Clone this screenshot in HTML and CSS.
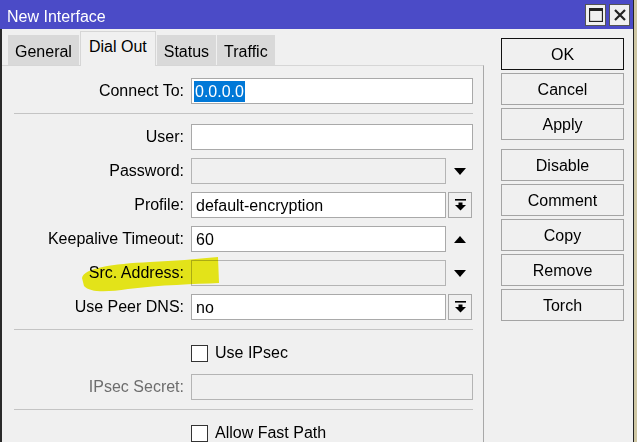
FILE: index.html
```html
<html>
<head>
    <link rel="stylesheet" href="styles.css">
    <title>New Interface</title>
</head>
<body>
    <div class="window">
        <div class="titlebar">
            <span class="title">New Interface</span>
            <span class="tbBtn">
                <svg width="14" height="14" viewBox="0 0 14 14"><rect x="0.5" y="0.5" width="13" height="13" fill="none" stroke="#222" stroke-width="1.3"/><rect x="0" y="0" width="14" height="3" fill="#222"/></svg>
            </span>
            <span class="tbBtn">
                <svg width="14" height="14" viewBox="0 0 14 14"><path d="M2 2 L12 12 M12 2 L2 12" stroke="#222" stroke-width="2.2"/></svg>
            </span>
        </div>
        <div class="winBody">
            <div class="main">
                <div class="tabs">
                    <div class="tab">General</div>
                    <div class="tab current">Dial Out</div>
                    <div class="tab">Status</div>
                    <div class="tab">Traffic</div>
                </div>
                <div class="panel">
                    <div class="row">
                        <label>Connect To:</label>
                        <div class="field"><span class="sel">0.0.0.0</span></div>
                    </div>
                    <div class="sep"></div>
                    <div class="row">
                        <label>User:</label>
                        <div class="field"></div>
                    </div>
                    <div class="row">
                        <label>Password:</label>
                        <div class="combo">
                            <div class="field off"></div>
                            <div class="arrow"><svg width="12" height="7" viewBox="0 0 12 7"><path d="M0 0 L12 0 L6 7 Z" fill="#000"/></svg></div>
                        </div>
                    </div>
                    <div class="row">
                        <label>Profile:</label>
                        <div class="combo">
                            <div class="field">default-encryption</div>
                            <div class="drop"><svg width="11" height="12" viewBox="0 0 11 12"><rect x="0" y="0" width="11" height="1.6" fill="#000"/><rect x="3.5" y="3.5" width="4" height="3" fill="#000"/><path d="M0 6 L11 6 L5.5 11.5 Z" fill="#000"/></svg></div>
                        </div>
                    </div>
                    <div class="row">
                        <label>Keepalive Timeout:</label>
                        <div class="combo">
                            <div class="field">60</div>
                            <div class="arrow"><svg width="12" height="7" viewBox="0 0 12 7"><path d="M0 7 L12 7 L6 0 Z" fill="#000"/></svg></div>
                        </div>
                    </div>
                    <div class="row">
                        <label>Src. Address:</label>
                        <div class="combo">
                            <div class="field off"></div>
                            <div class="arrow"><svg width="12" height="7" viewBox="0 0 12 7"><path d="M0 0 L12 0 L6 7 Z" fill="#000"/></svg></div>
                        </div>
                    </div>
                    <div class="row">
                        <label>Use Peer DNS:</label>
                        <div class="combo">
                            <div class="field">no</div>
                            <div class="drop"><svg width="11" height="12" viewBox="0 0 11 12"><rect x="0" y="0" width="11" height="1.6" fill="#000"/><rect x="3.5" y="3.5" width="4" height="3" fill="#000"/><path d="M0 6 L11 6 L5.5 11.5 Z" fill="#000"/></svg></div>
                        </div>
                    </div>
                    <div class="sep"></div>
                    <div class="row">
                        <span></span>
                        <div class="check"><span class="box"></span>Use IPsec</div>
                    </div>
                    <div class="row">
                        <label class="grey">IPsec Secret:</label>
                        <div class="field off"></div>
                    </div>
                    <div class="sep"></div>
                    <div class="row">
                        <span></span>
                        <div class="check"><span class="box"></span>Allow Fast Path</div>
                    </div>
                </div>
            </div>
            <div class="actions">
                <div class="btn default">OK</div>
                <div class="btn">Cancel</div>
                <div class="btn">Apply</div>
                <div class="btn gap">Disable</div>
                <div class="btn">Comment</div>
                <div class="btn">Copy</div>
                <div class="btn">Remove</div>
                <div class="btn">Torch</div>
            </div>
        </div>
        <!-- highlighter mark drawn over the form -->
        <svg class="marker" width="637" height="442" viewBox="0 0 637 442">
            <path d="M82 278 C84 268 112 264 150 262 C175 261 195 259 218 257 L219 283 C195 284 160 285 128 289 C108 292 90 293 84 286 Z" fill="#f2f21a"/>
        </svg>
    </div>
</body>
</html>
```

FILE: styles.css
```css
html, body
{
    margin: 0;
    padding: 0;
    background: #cfc7a4;
    overflow: hidden;
}
.window
{
    position: relative;
    width: 633px;
    height: 442px;
    border-right: 1px solid #222;
    background: #f0f0f0;
    font-family: "Liberation Sans", Arial, sans-serif;
    font-size: 16px;
    color: #000;
    overflow: hidden;
}
.titlebar
{
    height: 29px;
    background: #4b4bc7;
    display: flex;
    align-items: center;
    padding: 0 3px 0 7px;
}
.title
{
    color: #fff;
    flex: 1;
    padding-top: 4px;
}
.tbBtn
{
    width: 19px;
    height: 20px;
    margin-left: 3px;
    background: #f0f0f0;
    border: 1px solid #555;
    display: flex;
    align-items: center;
    justify-content: center;
}
.winBody
{
    display: flex;
    height: 413px;
    border-left: 2px solid #2a2a2a;
}
.main
{
    width: 482px;
    display: flex;
    flex-direction: column;
}
.tabs
{
    height: 36px;
    flex-shrink: 0;
    display: flex;
    align-items: flex-end;
    padding-left: 6px;
}
.tab
{
    height: 30px;
    line-height: 33px;
    padding: 0 7px;
    margin-right: 1px;
    background: #d9d9d9;
}
.tab.current
{
    height: 34px;
    line-height: 30px;
    padding: 0 8px;
    background: #f0f0f0;
    border: 1px solid #d6d6d6;
    border-bottom: none;
    margin-bottom: -1px;
    z-index: 1;
}
.panel
{
    flex: 1;
    border-top: 1px solid #d6d6d6;
    border-right: 1px solid #a8a8a8;
    padding-top: 11px;
}
.row
{
    display: grid;
    grid-template-columns: 182px 282px;
    column-gap: 7px;
    height: 26px;
    align-items: center;
    margin-bottom: 8px;
}
.row label
{
    text-align: right;
    line-height: 28px;
}
.row label.grey
{
    color: #6d6d6d;
}
.field
{
    height: 26px;
    box-sizing: border-box;
    border: 1px solid #a9a9a9;
    background: #fff;
    padding-left: 4px;
    line-height: 25px;
    white-space: nowrap;
    overflow: hidden;
}
.field.off
{
    background: #f0f0f0;
    border-color: #b4b4b4;
}
.sel
{
    background: #0078d7;
    color: #fff;
    padding: 2px 1px;
    margin-left: -2px;
}
.combo
{
    display: flex;
    align-items: center;
}
.combo .field
{
    width: 255px;
}
.arrow
{
    width: 27px;
    display: flex;
    justify-content: center;
}
.drop
{
    width: 24px;
    height: 26px;
    box-sizing: border-box;
    margin-left: 2px;
    border: 1px solid #a9a9a9;
    display: flex;
    align-items: center;
    justify-content: center;
}
.sep
{
    height: 1px;
    width: 459px;
    background: #c4c4c4;
    margin: 10px 0 9px 12px;
}
.check
{
    display: flex;
    align-items: center;
    line-height: 28px;
}
.box
{
    width: 17px;
    height: 17px;
    box-sizing: border-box;
    border: 1px solid #333;
    background: #fff;
    margin-right: 7px;
}
.actions
{
    padding: 9px 0 0 17px;
    display: flex;
    flex-direction: column;
    gap: 3px;
}
.btn
{
    width: 123px;
    height: 32px;
    box-sizing: border-box;
    border: 1px solid #a4a4a4;
    background: #f0f0f0;
    text-align: center;
    line-height: 31px;
}
.btn.default
{
    border-color: #111;
}
.btn.gap
{
    margin-top: 6px;
}
.marker
{
    position: absolute;
    left: 0;
    top: 0;
    mix-blend-mode: multiply;
    pointer-events: none;
}
```
